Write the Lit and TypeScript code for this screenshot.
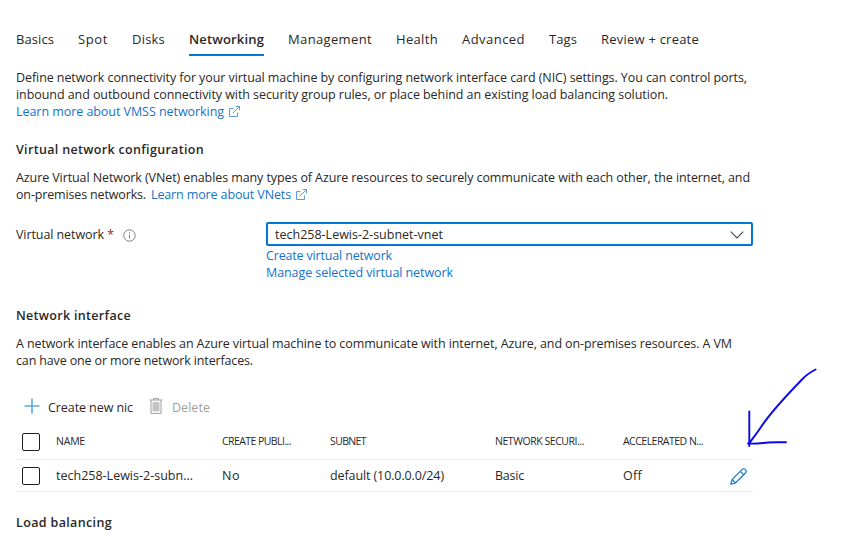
import { LitElement, html, css } from "lit";
import { customElement, property } from "lit/decorators.js";

/** One run of text whose letter spacing is adjusted so that it fills a given width. */
@customElement("fit-text")
class FitText extends LitElement {
  @property() text = "";
  @property({ type: Number }) width = 0;

  static styles = css`
    :host { display: inline-block; white-space: pre; }
    .run { display: inline-block; }
  `;

  render() {
    return html`<span class="run">${this.text}</span>`;
  }

  updated() {
    const run = this.renderRoot.querySelector<HTMLElement>(".run")!;
    run.style.letterSpacing = "0px";
    const natural = run.getBoundingClientRect().width;
    run.style.letterSpacing = `${(this.width - natural) / this.text.length}px`;
  }
}

const fit = (text: string, width: number) => html`<fit-text .text=${text} .width=${width}></fit-text>`;

const external = html`<svg class="ext" width="11" height="11" viewBox="0 0 11 11">
  <path d="M4.500 2.500H.5v8h8V6.500M3.800 7.200L10.200.8M6.800.5h3.700v3.700" />
</svg>`;

const tabs: [string, number][] = [
  ["Basics", 38], ["Spot", 30], ["Disks", 33], ["Networking", 75], ["Management", 84],
  ["Health", 42], ["Advanced", 63], ["Tags", 28], ["Review + create", 98],
];
const heads: [string, number][] = [
  ["NAME", 29], ["CREATE PUBLI...", 69], ["SUBNET", 36], ["NETWORK SECURI...", 89], ["ACCELERATED N...", 80],
];
const cells: [string, number][] = [
  ["tech258-Lewis-2-subn...", 137], ["No", 18], ["default (10.0.0.0/24)", 114], ["Basic", 29], ["Off", 19],
];

@customElement("app-root")
class AppRoot extends LitElement {
  static styles = css`
    :host {
      display: block; position: relative; box-sizing: border-box;
      width: 844px; height: 542px; overflow: hidden; background: #fff;
      padding: 30px 91px 0 16px;
      font: 12.5px/17px "Open Sans", "Noto Sans", sans-serif; color: #292827;
    }
    svg { display: block; fill: none; flex: none; }
    .tabs { display: flex; gap: 24px; height: 26px; font-size: 13px; }
    .tab { box-sizing: border-box; height: 26px; padding-top: 1px; }
    .tab.on { font-weight: 600; border-bottom: 2px solid #0078d4; }
    .line { display: flex; height: 17px; }
    .intro { margin-top: 13px; }
    .link { color: #1373c9; }
    .ext { stroke: #5a9bdc; stroke-width: 1; margin: 3px 0 0 5px; }
    .h { font-weight: 600; height: 17px; }
    .h1 { margin-top: 21px; }
    .p1 { margin-top: 11px; }
    .gap { margin-left: 5px; }
    .field { display: flex; margin-top: 19px; }
    .label { display: flex; width: 250px; padding-top: 4px; box-sizing: border-box; }
    .star { color: #a4262c; margin-left: 3px; width: 7px; font-size: 13px; }
    .info { stroke: #807e7c; margin: 3px 0 0 9px; }
    .select {
      display: flex; justify-content: space-between; box-sizing: border-box;
      width: 487px; height: 24px; border: 2px solid #0078d4; border-radius: 2px;
      padding: 2px 7px 0 7px;
    }
    .chev { stroke: #484644; stroke-width: 1.1; margin-top: 5px; }
    .sub { margin-top: 1px; }
    .h2 { margin-top: 26px; }
    .bar { display: flex; margin-top: 28px; height: 21px; padding-left: 8px; }
    .bar fit-text { margin-top: 2px; }
    .plus { stroke: #5aa9e4; stroke-width: 1.6; margin: 1px 8px 0 0; }
    .trash { stroke: #a19f9d; margin: 1px 9px 0 16px; }
    .off { color: #a19f9d; }
    .row {
      display: grid; grid-template-columns: 40px 166px 108px 165px 128px 107px 1fr;
      align-items: center; box-sizing: border-box; width: 737px; height: 32px;
      border-bottom: 1px solid #e8e7e6;
    }
    .row.head { height: 42px; padding-top: 6px; font-size: 10.5px; }
    .box { box-sizing: border-box; width: 18px; height: 18px; border: 1px solid #201f1e; border-radius: 2px; margin-left: 6px; }
    .pencil { stroke: #0078d4; stroke-width: 1.1; margin-top: 1px; }
    .h3 { margin-top: 22px; }
    .ink { position: absolute; left: 740px; top: 362px; stroke: #0909ea; stroke-width: 1.9; stroke-linecap: round; stroke-linejoin: round; }
  `;

  render() {
    return html`
      <nav class="tabs">
        ${tabs.map(([t, w]) => html`<div class="tab ${t === "Networking" ? "on" : ""}">${fit(t, w)}</div>`)}
      </nav>
      <div class="intro">
        <div class="line">${fit("Define network connectivity for your virtual machine by configuring network interface card (NIC) settings. You can control ports,", 731)}</div>
        <div class="line">${fit("inbound and outbound connectivity with security group rules, or place behind an existing load balancing solution.", 652)}</div>
        <div class="line link">${fit("Learn more about VMSS networking", 208)}${external}</div>
      </div>
      <div class="h h1">${fit("Virtual network configuration", 188)}</div>
      <div class="p1">
        <div class="line">${fit("Azure Virtual Network (VNet) enables many types of Azure resources to securely communicate with each other, the internet, and", 734)}</div>
        <div class="line">${fit("on-premises networks.", 130)}<span class="line link gap">${fit("Learn more about VNets", 140)}${external}</span></div>
      </div>
      <div class="field">
        <div class="label">
          ${fit("Virtual network", 88)}<span class="star">*</span>
          <svg class="info" width="13" height="13" viewBox="0 0 13 13"><circle cx="6.5" cy="6.5" r="5.7" /><path d="M6.5 5.5v4M6.5 3.2v1.2" /></svg>
        </div>
        <div>
          <div class="select">
            ${fit("tech258-Lewis-2-subnet-vnet", 168)}
            <svg class="chev" width="14" height="8" viewBox="0 0 14 8"><path d="M.8.7L7 6.9 13.2.7" /></svg>
          </div>
          <div class="line link sub">${fit("Create virtual network", 126)}</div>
          <div class="line link">${fit("Manage selected virtual network", 187)}</div>
        </div>
      </div>
      <div class="h h2">${fit("Network interface", 115)}</div>
      <div class="p1">
        <div class="line">${fit("A network interface enables an Azure virtual machine to communicate with internet, Azure, and on-premises resources. A VM", 716)}</div>
        <div class="line">${fit("can have one or more network interfaces.", 237)}</div>
      </div>
      <div class="bar">
        <svg class="plus" width="16" height="16" viewBox="0 0 16 16"><path d="M8 .5v15M.5 8h15" /></svg>
        ${fit("Create new nic", 85)}
        <svg class="trash" width="14" height="16" viewBox="0 0 14 16">
          <path d="M.5 2h13M4.500 2V.6h5V2M2 2v13.400h10V2" /><path d="M4 4.500h6v8.500H4z" fill="#c4c3c2" stroke="#c4c3c2" />
        </svg>
        <span class="off">${fit("Delete", 38)}</span>
      </div>
      <div class="row head"><i class="box"></i>${heads.map(([t, w]) => fit(t, w))}</div>
      <div class="row">
        <i class="box"></i>${cells.map(([t, w]) => fit(t, w))}
        <svg class="pencil" width="17" height="17" viewBox="0 0 17 17">
          <path d="M.8 16.200l1.300-4.700L12 1.600a2.400 2.400 0 0 1 3.400 3.400L5.500 14.900zM10.300 3.300l3.400 3.400M2.100 11.500l3.400 3.400" />
        </svg>
      </div>
      <div class="h h3">${fit("Load balancing", 96)}</div>
      <svg class="ink" width="84" height="90" viewBox="0 0 84 90">
        <path d="M75.500 7.500C70 10.500 66 13 62.500 17 44 36 29 53 21 65c-4 6-8 11-11.500 16M9.300 49.500v34.500M8 81.500c7 .6 13-.4 20-1 6-.6 12-.2 18-.2" />
      </svg>
    `;
  }
}
